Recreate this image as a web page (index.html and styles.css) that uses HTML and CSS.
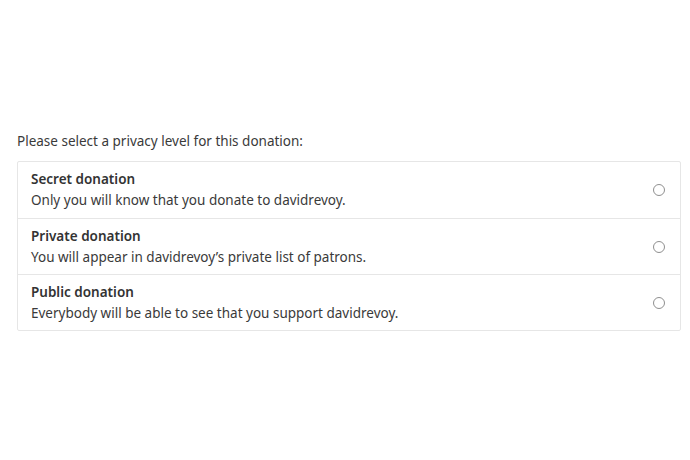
FILE: index.html
```html
<!DOCTYPE html>
<html>
<head>
<meta charset="utf-8">
<link rel="stylesheet" href="styles.css">
</head>
<body>
<div class="page">
  <p class="prompt">Please select a privacy level for this donation:</p>
  <div class="options">
    <label class="option">
      <div class="text">
        <div class="title">Secret donation</div>
        <div class="desc">Only you will know that you donate to davidrevoy.</div>
      </div>
      <span class="radio"></span>
    </label>
    <label class="option">
      <div class="text">
        <div class="title">Private donation</div>
        <div class="desc">You will appear in davidrevoy’s private list of patrons.</div>
      </div>
      <span class="radio"></span>
    </label>
    <label class="option">
      <div class="text">
        <div class="title">Public donation</div>
        <div class="desc">Everybody will be able to see that you support davidrevoy.</div>
      </div>
      <span class="radio"></span>
    </label>
  </div>
</div>
</body>
</html>
```
FILE: styles.css
```css
html, body {
  margin: 0;
  padding: 0;
  background: #fff;
}
body {
  font-family: "Noto Sans", "Open Sans", sans-serif;
  font-size: 13.5px;
  color: #333;
}
.page {
  padding: 131px 9px 0 17px;
}
.prompt {
  margin: 0 0 10px 0;
  line-height: 20px;
  color: #3a3a3a;
}
.options {
  border: 1px solid #e6e6e6;
  border-radius: 2px;
}
.option {
  display: flex;
  align-items: center;
  height: 56px;
  padding: 0 15px 0 13px;
  box-sizing: border-box;
  border-top: 1px solid #e6e6e6;
}
.option:first-child {
  border-top: none;
}
.text {
  flex: 1;
}
.title {
  font-weight: 600;
  line-height: 20px;
  color: #333;
}
.desc {
  line-height: 22px;
  color: #3a3a3a;
}
.radio {
  width: 12px;
  height: 12px;
  border: 1.5px solid #8f8f8f;
  border-radius: 50%;
  box-sizing: border-box;
}
```
